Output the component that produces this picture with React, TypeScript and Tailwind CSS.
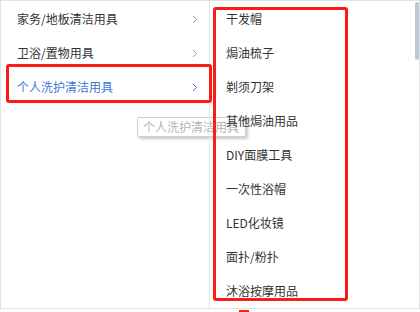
import React from "react";

const leftItems = ["家务/地板清洁用具", "卫浴/置物用具", "个人洗护清洁用具"];
const rightItems = [
  "干发帽",
  "焗油梳子",
  "剃须刀架",
  "其他焗油用品",
  "DIY面膜工具",
  "一次性浴帽",
  "LED化妆镜",
  "面扑/粉扑",
  "沐浴按摩用品",
];

function Chevron({ color }: { color: string }) {
  return (
    <svg width="6" height="9" viewBox="0 0 6 9" fill="none">
      <polyline points="1,1 4.5,4.5 1,8" stroke={color} strokeWidth="1" />
    </svg>
  );
}

export default function App() {
  return (
    <div
      className="w-[420px] h-[312px] bg-white overflow-hidden"
      style={{ fontFamily: '"Noto Sans CJK SC", "Noto Sans", sans-serif' }}
    >
      <div className="relative w-[420px] h-[309px] border border-[#e2e2e2] bg-white">
        {/* tooltip under the panels */}
        <div className="absolute left-[136px] top-[116px] w-[109px] h-[20px] z-0 border border-[#cfcfcf] rounded-[2px] bg-white shadow-[2px_2px_3px_rgba(0,0,0,0.22)] flex items-center pl-[5px] text-[12px] leading-none text-[#b4b4b4] whitespace-nowrap overflow-hidden">
          个人洗护清洁用具
        </div>

        <div className="relative z-10 flex h-full">
          <div className="w-[209px] h-full border-r border-[#e6e6e6] pt-[1px]">
            {leftItems.map((t, i) => {
              const active = i === 2;
              return (
                <div
                  key={t}
                  className={`h-[34px] flex items-center justify-between pl-[16px] pr-[11px] text-[12px] ${
                    active ? "text-[#3a78db]" : "text-[#333333]"
                  }`}
                >
                  <span>{t}</span>
                  <Chevron color={active ? "#3a78db" : "#999999"} />
                </div>
              );
            })}
          </div>
          <div className="relative flex-1 h-full pt-[1px]">
            {rightItems.map((t) => (
              <div
                key={t}
                className="h-[34px] flex items-center pl-[16px] text-[12px] text-[#333333]"
              >
                {t}
              </div>
            ))}
            <div className="absolute right-[0px] top-[1px] w-[4px] h-[58px] rounded-[2px] bg-[#b7c8da]" />
          </div>
        </div>

        {/* annotation boxes */}
        <div className="absolute z-20 left-[5px] top-[63px] w-[206px] h-[39px] border-[3px] border-[#ff1a1a] rounded-[3px]" />
        <div className="absolute z-20 left-[212px] top-[6px] w-[135px] h-[294px] border-[3px] border-[#ff1a1a] rounded-[3px]" />
      </div>
      <div className="ml-[239px] mt-[1px] w-[10px] h-[2px] bg-[#ff1a1a]" />
    </div>
  );
}
